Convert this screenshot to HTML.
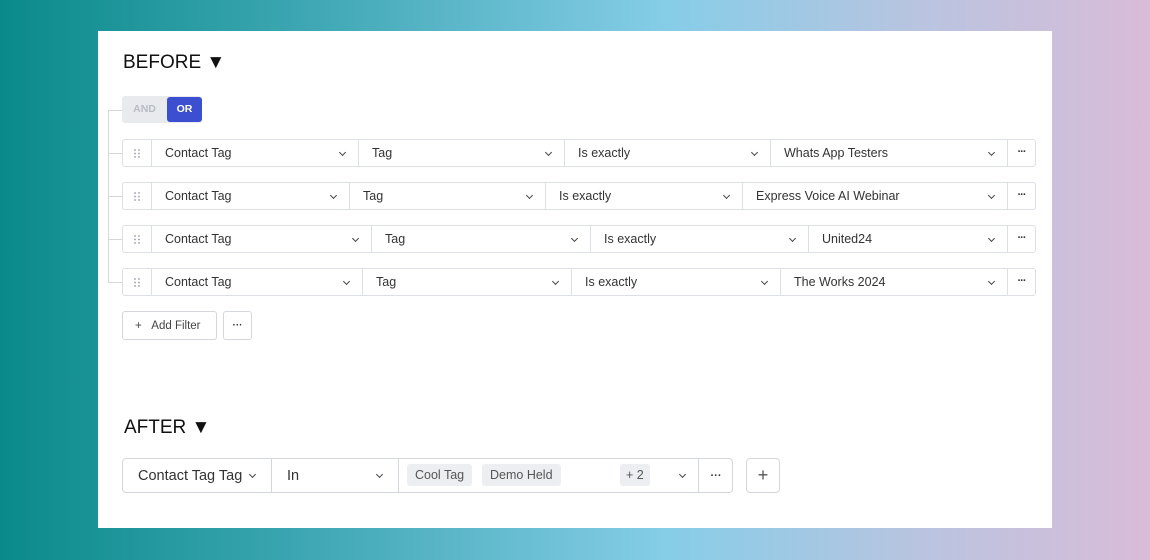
<!DOCTYPE html>
<html><head><style>
*{box-sizing:border-box;margin:0;padding:0}
body{width:1150px;height:560px;overflow:hidden;font-family:"Liberation Sans",sans-serif;background:linear-gradient(90deg,#0a8a8a 0%,#3aa5b0 25%,#86cde8 58%,#b9c4e0 80%,#d9bcd8 100%);position:relative}
.card{position:absolute;left:98px;top:31px;width:954px;height:497px;background:#fff}
.abs{position:absolute}
.h{font-size:19px;color:#111}
.row{position:absolute;left:122px;width:914px;height:28px;border:1px solid #dcdfe4;border-radius:3px;background:#fff}
.c{position:absolute;top:0;height:26px;border-left:1px solid #dcdfe4;font-size:12.5px;color:#333;line-height:27px;padding-left:13px}
.chev{position:absolute;right:13px;top:10px;width:5px;height:5px;border-right:1.5px solid #444;border-bottom:1.5px solid #444;transform:rotate(45deg)}
.dots{font-size:11px;color:#333;text-align:center;padding:0;letter-spacing:-1px;font-weight:bold;line-height:24px}
.grip{position:absolute;left:0;top:0;width:28px;height:26px}
.grip svg{position:absolute;left:11px;top:9px}
.tl{position:absolute;background:#d4d7dc}
.tag{display:inline-block;background:#eceef2;border-radius:3px;padding:0 8px;height:22px;line-height:22px;font-size:12.5px;color:#555;margin-top:5px}
</style></head><body>
<div class="card"></div>
<div class="abs h" style="left:123px;top:52px">BEFORE ▼</div>
<div class="tl" style="left:108px;top:110px;width:1px;height:173px"></div>
<div class="tl" style="left:108px;top:110px;width:14px;height:1px"></div>
<div class="tl" style="left:108px;top:153px;width:14px;height:1px"></div>
<div class="tl" style="left:108px;top:196px;width:14px;height:1px"></div>
<div class="tl" style="left:108px;top:239px;width:14px;height:1px"></div>
<div class="tl" style="left:108px;top:282px;width:14px;height:1px"></div>
<div class="abs" style="left:122px;top:96px;width:80px;height:27px;background:#e8eaee;border-radius:3px"></div>
<div class="abs" style="left:122px;top:96px;width:45px;height:27px;line-height:27px;text-align:center;font-size:10.5px;font-weight:bold;color:#b8bcc4">AND</div>
<div class="abs" style="left:167px;top:97px;width:35px;height:25px;line-height:25px;text-align:center;font-size:10.5px;font-weight:bold;color:#fff;background:#3b4fd0;border-radius:3px">OR</div>

<div class="row" style="top:139px"><div class="grip"><svg width="6" height="9"><g fill="#99a"><circle cx="1" cy="1" r=".9"/><circle cx="5" cy="1" r=".9"/><circle cx="1" cy="4.5" r=".9"/><circle cx="5" cy="4.5" r=".9"/><circle cx="1" cy="8" r=".9"/><circle cx="5" cy="8" r=".9"/></g></svg></div>
<div class="c" style="left:28px;width:207px">Contact Tag<span class="chev"></span></div>
<div class="c" style="left:235px;width:206px">Tag<span class="chev"></span></div>
<div class="c" style="left:441px;width:206px">Is exactly<span class="chev"></span></div>
<div class="c" style="left:647px;width:237px">Whats App Testers<span class="chev"></span></div>
<div class="c dots" style="left:884px;width:28px">···</div></div>

<div class="row" style="top:182px"><div class="grip"><svg width="6" height="9"><g fill="#99a"><circle cx="1" cy="1" r=".9"/><circle cx="5" cy="1" r=".9"/><circle cx="1" cy="4.5" r=".9"/><circle cx="5" cy="4.5" r=".9"/><circle cx="1" cy="8" r=".9"/><circle cx="5" cy="8" r=".9"/></g></svg></div>
<div class="c" style="left:28px;width:198px">Contact Tag<span class="chev"></span></div>
<div class="c" style="left:226px;width:196px">Tag<span class="chev"></span></div>
<div class="c" style="left:422px;width:197px">Is exactly<span class="chev"></span></div>
<div class="c" style="left:619px;width:265px">Express Voice AI Webinar<span class="chev"></span></div>
<div class="c dots" style="left:884px;width:28px">···</div></div>

<div class="row" style="top:225px"><div class="grip"><svg width="6" height="9"><g fill="#99a"><circle cx="1" cy="1" r=".9"/><circle cx="5" cy="1" r=".9"/><circle cx="1" cy="4.5" r=".9"/><circle cx="5" cy="4.5" r=".9"/><circle cx="1" cy="8" r=".9"/><circle cx="5" cy="8" r=".9"/></g></svg></div>
<div class="c" style="left:28px;width:220px">Contact Tag<span class="chev"></span></div>
<div class="c" style="left:248px;width:219px">Tag<span class="chev"></span></div>
<div class="c" style="left:467px;width:218px">Is exactly<span class="chev"></span></div>
<div class="c" style="left:685px;width:199px">United24<span class="chev"></span></div>
<div class="c dots" style="left:884px;width:28px">···</div></div>

<div class="row" style="top:268px"><div class="grip"><svg width="6" height="9"><g fill="#99a"><circle cx="1" cy="1" r=".9"/><circle cx="5" cy="1" r=".9"/><circle cx="1" cy="4.5" r=".9"/><circle cx="5" cy="4.5" r=".9"/><circle cx="1" cy="8" r=".9"/><circle cx="5" cy="8" r=".9"/></g></svg></div>
<div class="c" style="left:28px;width:211px">Contact Tag<span class="chev"></span></div>
<div class="c" style="left:239px;width:209px">Tag<span class="chev"></span></div>
<div class="c" style="left:448px;width:209px">Is exactly<span class="chev"></span></div>
<div class="c" style="left:657px;width:227px">The Works 2024<span class="chev"></span></div>
<div class="c dots" style="left:884px;width:28px">···</div></div>

<div class="abs" style="left:122px;top:311px;width:95px;height:29px;border:1px solid #d4d7dc;border-radius:3px;font-size:11.5px;color:#444;line-height:28px;padding-left:12px">+&nbsp;&nbsp;&nbsp;Add Filter</div>
<div class="abs" style="left:223px;top:311px;width:29px;height:29px;border:1px solid #d4d7dc;border-radius:3px;font-size:10px;font-weight:bold;color:#333;text-align:center;line-height:27px">···</div>

<div class="abs h" style="left:124px;top:417px">AFTER ▼</div>
<div class="abs" style="left:122px;top:458px;width:611px;height:35px;border:1px solid #d4d7dc;border-radius:4px">
<div class="abs" style="left:15px;top:0;line-height:35px;font-size:14.5px;color:#333">Contact Tag Tag</div>
<span class="chev" style="left:127px;top:13px"></span>
<div class="abs" style="left:148px;top:0;width:1px;height:33px;background:#d4d7dc"></div>
<div class="abs" style="left:164px;top:0;line-height:35px;font-size:14.5px;color:#333">In</div>
<span class="chev" style="left:254px;top:13px"></span>
<div class="abs" style="left:275px;top:0;width:1px;height:33px;background:#d4d7dc"></div>
<div class="abs" style="left:284px;top:0"><span class="tag">Cool Tag</span></div>
<div class="abs" style="left:359px;top:0"><span class="tag">Demo Held</span></div>
<div class="abs" style="left:497px;top:0"><span class="tag" style="padding:0 6px">+ 2</span></div>
<span class="chev" style="left:557px;top:13px"></span>
<div class="abs" style="left:575px;top:0;width:1px;height:33px;background:#d4d7dc"></div>
<div class="abs" style="left:576px;top:0;width:34px;line-height:34px;text-align:center;font-size:11px;font-weight:bold;color:#333">···</div>
</div>
<div class="abs" style="left:746px;top:458px;width:34px;height:35px;border:1px solid #d4d7dc;border-radius:4px;text-align:center;line-height:33px;font-size:18px;color:#555">+</div>
</body></html>
